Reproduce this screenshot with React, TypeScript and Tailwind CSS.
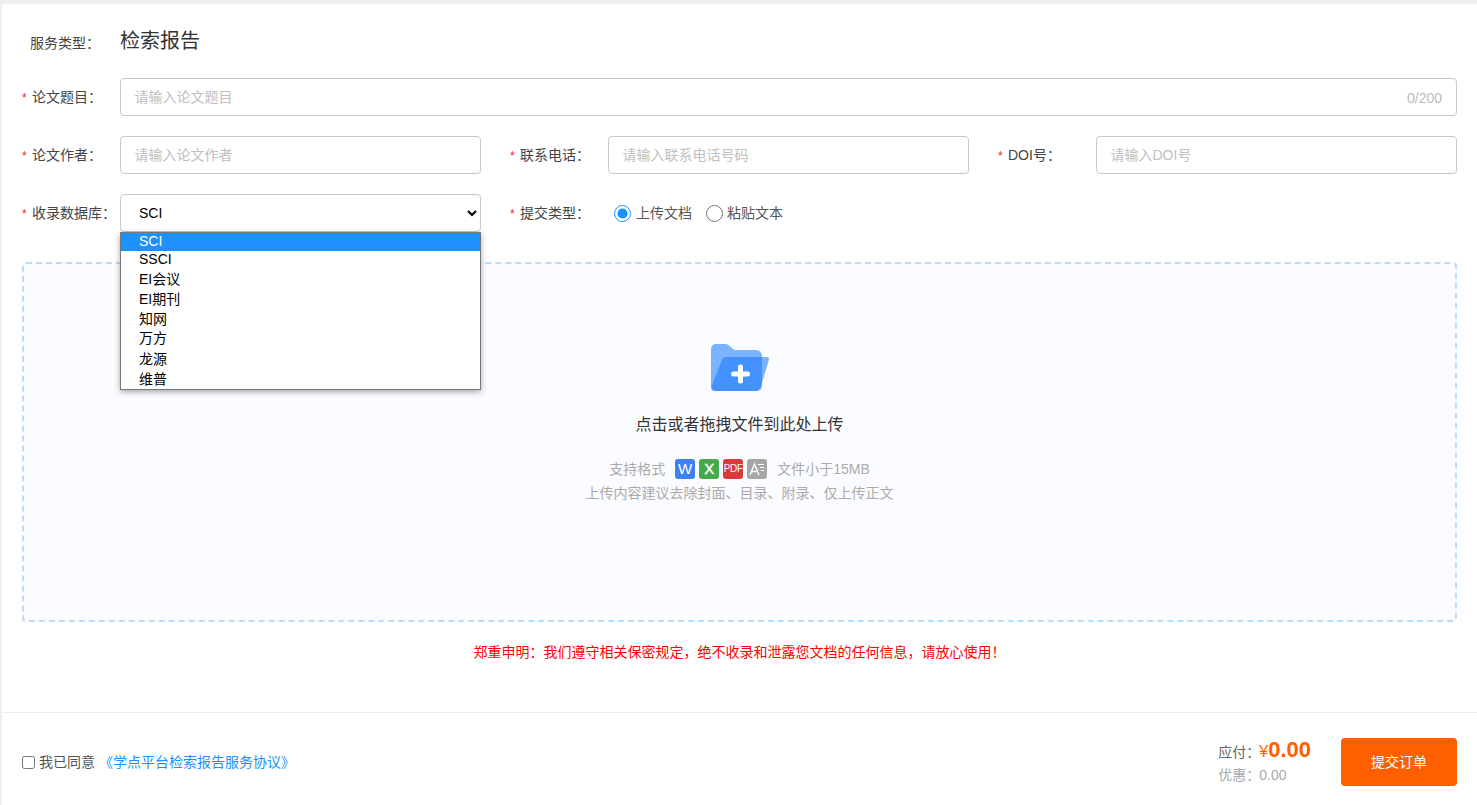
import React from 'react';

const FONT = "font-['Liberation_Sans','Noto_Sans_CJK_SC',sans-serif]";

const dbOptions = [
  { name: 'SCI', h: 'h-[18px] pb-0.5 bg-[#1e90ff] text-white' },
  { name: 'SSCI', h: 'h-[18px] pb-0.5' },
  { name: 'EI会议', h: 'h-5' },
  { name: 'EI期刊', h: 'h-5' },
  { name: '知网', h: 'h-5' },
  { name: '万方', h: 'h-5 pb-0.5' },
  { name: '龙源', h: 'h-5' },
  { name: '维普', h: 'h-5' },
];

function Label({ text, required = true }: { text: string; required?: boolean }) {
  return (
    <label className="flex w-[98px] shrink-0 items-center text-sm text-[#444]">
      {required && <span className="w-2.5 pt-0.5 text-xs text-[#f5222d]">*</span>}
      {text}：
    </label>
  );
}

function TextInput({ placeholder }: { placeholder: string }) {
  return (
    <input
      placeholder={placeholder}
      className="h-[38px] min-w-0 flex-1 rounded border border-[#c8c8c8] bg-white pl-[13.500px] pr-3.5 text-sm outline-none placeholder:text-[#c0c0c0]"
    />
  );
}

function FolderIcon() {
  return (
    <svg width="58" height="47" viewBox="0 0 58 47">
      <path
        d="M0 5a5 5 0 0 1 5-5h9c2 0 3 .6 4.500 2l3 2.500c1 .9 2 1.500 3.500 1.500h20a6 6 0 0 1 6 6v30a5 5 0 0 1-5 5H5a5 5 0 0 1-5-5z"
        fill="#1477ff"
        fillOpacity="0.55"
      />
      <path
        d="M11.500 15a3 3 0 0 1 3-2H56a2 2 0 0 1 2 2.500L50 42a7 7 0 0 1-6 5H4c-3 0-4.500-2-3.500-5z"
        fill="#1477ff"
        fillOpacity="0.55"
      />
      <rect x="20" y="27.500" width="19" height="5" rx="2.500" fill="#fff" />
      <rect x="27" y="20.500" width="5" height="19" rx="2.500" fill="#fff" />
    </svg>
  );
}

function FormatBadges() {
  return (
    <div className="mx-2.5 flex gap-1">
      <span className="flex h-5 w-5 items-center justify-center rounded-[3px] bg-[#3f7ff5] text-[15px] text-white">W</span>
      <span className="flex h-5 w-5 items-center justify-center rounded-[3px] bg-[#45ab4a] text-[15px] text-white [-webkit-text-stroke:0.4px_#fff]">X</span>
      <span className="flex h-5 w-5 items-center justify-center rounded-[3px] bg-[#dc3a3a] text-[10px] tracking-[-0.3px] text-white">PDF</span>
      <span className="flex h-5 w-5 items-center justify-center rounded-[3px] bg-[#a6a6a6] text-white">
        <svg width="16" height="14" viewBox="0 0 16 14" fill="none" stroke="#fff">
          <path d="M1 13 5.500 2 10 13M2.800 9.500h5.500" strokeWidth="1.300" />
          <path d="M9 2.500h6M11 5.500h4M12 8.500h3" strokeWidth="1.100" />
        </svg>
      </span>
    </div>
  );
}

export default function App() {
  return (
    <div className={`${FONT} h-[805px] overflow-hidden bg-[#efefef] pl-0.5 pt-1`}>
      <div className="flex h-full flex-col bg-white">
        <div className="flex flex-1 flex-col px-5">
          {/* Service type */}
          <div className="flex h-[74px] items-center">
            <span className="w-[98px] pl-2 pt-1 text-sm text-[#444]">服务类型：</span>
            <span className="text-xl text-[#333]">检索报告</span>
          </div>

          {/* Title */}
          <div className="flex items-center">
            <Label text="论文题目" />
            <div className="relative flex flex-1">
              <TextInput placeholder="请输入论文题目" />
              <span className="absolute right-[15px] top-[10px] text-sm text-[#bbb]">0/200</span>
            </div>
          </div>

          <div className="mt-5 grid grid-cols-[459px_459px_459px] gap-x-[29px] gap-y-5">
            <div className="flex items-center">
              <Label text="论文作者" />
              <TextInput placeholder="请输入论文作者" />
            </div>
            <div className="flex items-center">
              <Label text="联系电话" />
              <TextInput placeholder="请输入联系电话号码" />
            </div>
            <div className="flex items-center">
              <Label text="DOI号" />
              <TextInput placeholder="请输入DOI号" />
            </div>

            <div className="flex items-center">
              <Label text="收录数据库" />
              <div className="relative flex-1">
                <select className="h-[38px] w-full rounded border border-[#c8c8c8] bg-white pl-3.5 text-sm text-black outline-none">
                  {dbOptions.map((o) => (
                    <option key={o.name}>{o.name}</option>
                  ))}
                </select>
                {/* open native list */}
                <ul className="absolute left-0 right-0 top-[38px] z-10 border border-[#767676] bg-white text-sm text-black shadow-[0_2px_6px_rgba(0,0,0,0.35)]">
                  {dbOptions.map((o) => (
                    <li key={o.name} className={`flex items-center pl-[18px] ${o.h}`}>
                      {o.name}
                    </li>
                  ))}
                </ul>
              </div>
            </div>
            <div className="flex items-center">
              <Label text="提交类型" />
              <div className="flex items-center text-sm text-[#555]">
                <label className="ml-1.5 flex items-center gap-[5px]">
                  <input type="radio" name="kind" defaultChecked className="m-0 h-[17px] w-[17px] accent-[#1890ff]" />
                  上传文档
                </label>
                <label className="ml-[14px] flex items-center gap-1">
                  <input type="radio" name="kind" className="m-0 h-[17px] w-[17px]" />
                  粘贴文本
                </label>
              </div>
            </div>
          </div>

          {/* Upload area */}
          <div className="mt-[30px] flex h-[360px] flex-col items-center rounded border-2 border-dashed border-[#bcdcf8] bg-[#fbfcff] pt-20">
            <FolderIcon />
            <p className="mt-[23px] text-base leading-[22px] text-[#333]">点击或者拖拽文件到此处上传</p>
            <div className="mt-[23px] flex items-center text-sm text-[#aaa]">
              <span>支持格式</span>
              <FormatBadges />
              <span>文件小于15MB</span>
            </div>
            <p className="mt-1 text-sm text-[#aaa]">上传内容建议去除封面、目录、附录、仅上传正文</p>
          </div>

          <p className="mt-5 text-center text-sm text-[#f00]">
            郑重申明：我们遵守相关保密规定，绝不收录和泄露您文档的任何信息，请放心使用！
          </p>
        </div>

        {/* Footer */}
        <div className="flex h-[93px] items-center justify-between border-t border-[#ececec] px-5 pt-1.5">
          <div className="flex items-center text-sm text-[#555]">
            <input type="checkbox" className="m-0 h-[13px] w-[13px]" />
            <span className="ml-1">我已同意</span>
            <a className="ml-1 text-[#1890ff]">《学点平台检索报告服务协议》</a>
          </div>
          <div className="flex items-center">
            <div className="mb-[3px] mr-[30px]">
              <div className="flex items-baseline text-sm text-[#666]">
                <span className="w-[41px] whitespace-nowrap">应付：</span>
                <span className="text-base text-[#ff5f00]">¥</span>
                <span className="text-[22px] font-bold leading-7 text-[#ff5f00]">0.00</span>
              </div>
              <div className="mt-px flex text-sm leading-5 text-[#aaa]">
                <span className="w-[41px] whitespace-nowrap">优惠：</span>
                <span>0.00</span>
              </div>
            </div>
            <button className="h-12 w-[116px] rounded bg-[#ff5f00] text-sm text-white">提交订单</button>
          </div>
        </div>
      </div>
    </div>
  );
}
